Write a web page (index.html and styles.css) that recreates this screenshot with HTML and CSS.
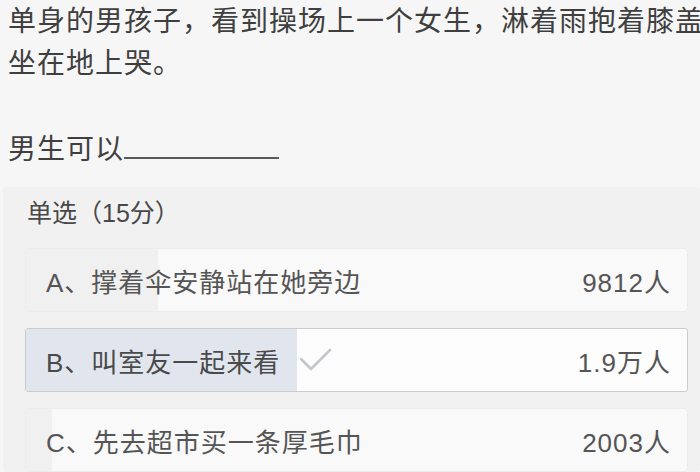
FILE: index.html
```html
<!DOCTYPE html>
<html lang="zh-CN">

<head>
  <meta charset="UTF-8">
  <meta name="viewport" content="width=device-width, initial-scale=1.0">
  <title>单选题</title>
  <link rel="stylesheet" href="styles.css">
</head>

<body>
  <div class="question">
    <p class="stem">单身的男孩子，看到操场上一个女生，淋着雨抱着膝盖<br>坐在地上哭。</p>
    <p class="stem ask">男生可以<span class="blank"></span></p>
  </div>

  <div class="card">
    <div class="card_title">单选（15分）</div>
    <ul class="options">
      <li class="option">
        <span class="bar" style="width: 20%"></span>
        <span class="label">A、撑着伞安静站在她旁边</span>
        <span class="count">9812人</span>
      </li>
      <li class="option chosen">
        <span class="bar" style="width: 41%"></span>
        <span class="label">B、叫室友一起来看</span>
        <svg class="tick" width="34" height="24" viewBox="0 0 34 24">
          <path d="M2 11 L12 21 L31 2" fill="none" stroke="#c3c6cb" stroke-width="2.6" stroke-linecap="round" stroke-linejoin="round" />
        </svg>
        <span class="count">1.9万人</span>
      </li>
      <li class="option">
        <span class="bar" style="width: 4%"></span>
        <span class="label">C、先去超市买一条厚毛巾</span>
        <span class="count">2003人</span>
      </li>
    </ul>
  </div>
</body>

</html>
```

FILE: styles.css
```css
* {
  margin: 0;
  padding: 0;
  box-sizing: border-box;
}

html,
body {
  overflow: hidden;
}

body {
  width: 700px;
  height: 472px;
  padding-top: 1px;
  background: #f6f6f6;
  color: #444;
  font-family: "Liberation Sans", "Noto Sans CJK SC", sans-serif;
}

/* 题干 */
.question {
  padding: 0 0 0 8px;
  width: 760px;
}

.stem {
  font-size: 28px;
  line-height: 42px;
  letter-spacing: 1px;
  color: #3f3f3f;
  white-space: nowrap;
}

.ask {
  margin-top: 44px;
}

.blank {
  display: inline-block;
  width: 155px;
  height: 2px;
  border-bottom: 2px solid #5a5a5a;
}

/* 选项卡片 */
.card {
  margin: 16px 0 0 3px;
  padding: 8px 12px 0 22px;
  background: #f1f1f1;
  border-radius: 4px;
}

.card_title {
  font-size: 25px;
  line-height: 36px;
  color: #484848;
  padding-left: 2px;
}

.options {
  list-style: none;
  margin-top: 17px;
}

.option {
  position: relative;
  display: flex;
  align-items: center;
  height: 64px;
  margin-bottom: 16px;
  padding: 0 16px 0 20px;
  background: #f9f9f9;
  border: 1px solid #ececec;
  border-radius: 3px;
  font-size: 26px;
  letter-spacing: 1px;
  color: #555;
  overflow: hidden;
}

.option .bar {
  position: absolute;
  left: 0;
  top: 0;
  bottom: 0;
  background: #f0f0f0;
}

.option .label,
.option .count,
.option .tick {
  position: relative;
}

.option .label {
  flex: none;
}

.option .count {
  margin-left: auto;
}

.chosen {
  background: #fdfdfd;
  border: 1.5px solid #c8cbd0;
}

.chosen .bar {
  background: #e1e6ee;
}

.chosen .label {
  color: #4a4a4a;
}

.tick {
  margin: 0 0 0 19px;
}
```
